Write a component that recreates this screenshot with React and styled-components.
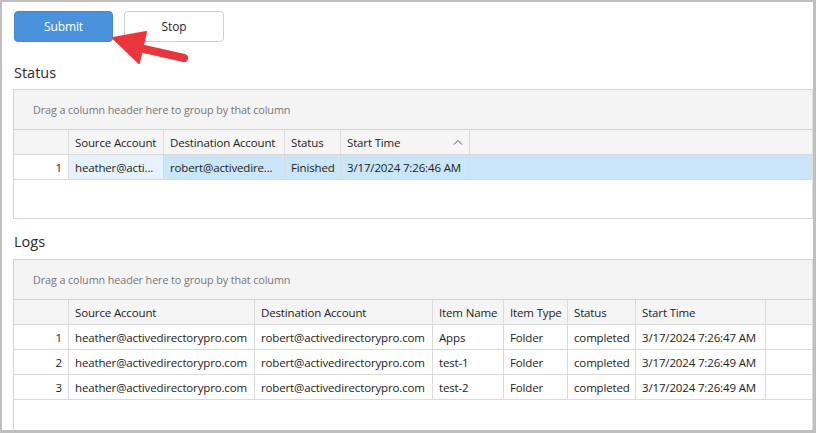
import React from "react";
import styled, { createGlobalStyle } from "styled-components";

const Global = createGlobalStyle`
  html, body { margin: 0; padding: 0; background: #fff; }
  body { font-family: "Open Sans", "Noto Sans", sans-serif; color: #1e1e1e; }
`;

const Frame = styled.div`
  position: relative;
  box-sizing: border-box;
  width: 816px;
  height: 433px;
  overflow: hidden;
  border-style: solid;
  border-color: #bfbfbf;
  border-width: 2px 3px 3px 2px;
  padding: 9px 0 0 11px;
  background: #fff;
`;

const Toolbar = styled.div`
  display: flex;
  gap: 11px;
  padding-left: 1px;
`;

const Button = styled.button`
  box-sizing: border-box;
  width: ${(p) => p.$w}px;
  height: 31px;
  border-radius: 4px;
  font-family: "Open Sans", sans-serif;
  font-size: 12px;
  letter-spacing: -0.1px;
  cursor: pointer;
  border: 1px solid ${(p) => (p.$primary ? "#3f88d4" : "#cfcfcf")};
  background: ${(p) => (p.$primary ? "#4a93dc" : "#ffffff")};
  color: ${(p) => (p.$primary ? "#ffffff" : "#1e1e1e")};
  padding: 0;
`;

const SectionTitle = styled.div`
  font-size: 14.5px;
  color: #2a2a2a;
  height: 20px;
  line-height: 20px;
  margin: ${(p) => p.$m};
  padding-left: 1px;
`;

const Grid = styled.div`
  box-sizing: border-box;
  border: 1px solid #d4d4d4;
  border-right: 1px solid #e0e0e0;
  height: ${(p) => p.$h}px;
  background: #fff;
  font-size: 11.5px;
  letter-spacing: -0.15px;
`;

const GroupPanel = styled.div`
  height: 39px;
  background: #f4f4f4;
  border-bottom: 1px solid #d4d4d4;
  display: flex;
  align-items: center;
  padding-left: 19px;
  font-size: 10.8px;
  letter-spacing: -0.1px;
  color: #777;
`;

const Row = styled.div`
  display: flex;
  height: 25px;
  box-sizing: border-box;
  border-bottom: 1px solid #dadada;
  background: ${(p) => (p.$header ? "#f5f5f5" : p.$selected ? "#cbe6f8" : "#fff")};
`;

const Cell = styled.div`
  box-sizing: border-box;
  flex: 0 0 ${(p) => p.$w}px;
  width: ${(p) => p.$w}px;
  border-right: 1px solid #dadada;
  padding: 0 6px;
  display: flex;
  align-items: center;
  justify-content: ${(p) => (p.$num ? "flex-end" : "space-between")};
  white-space: nowrap;
  overflow: hidden;
  color: #222;
  background: ${(p) => (p.$bg ? p.$bg : "transparent")};
`;

const Fill = styled.div`
  flex: 1;
`;

const Arrow = styled.svg`
  position: absolute;
  left: 0;
  top: 0;
  pointer-events: none;
`;

const Chevron = () => (
  <svg width="10" height="6" viewBox="0 0 10 6">
    <path d="M1 5.5 L5 1.5 L9 5.5" fill="none" stroke="#555" strokeWidth="1" />
  </svg>
);

const statusCols = [55, 95, 121, 56, 129];
const logCols = [55, 186, 178, 71, 64, 68, 130];

export default function App() {
  return (
    <>
      <Global />
      <Frame>
        <Toolbar>
          <Button $primary $w={99}>Submit</Button>
          <Button $w={100}>Stop</Button>
        </Toolbar>
        <SectionTitle $m="21px 0 6px 0">Status</SectionTitle>
        <Grid $h={130}>
          <GroupPanel>Drag a column header here to group by that column</GroupPanel>
          <Row $header>
            <Cell $w={statusCols[0]} />
            <Cell $w={statusCols[1]}>Source Account</Cell>
            <Cell $w={statusCols[2]}>Destination Account</Cell>
            <Cell $w={statusCols[3]}>Status</Cell>
            <Cell $w={statusCols[4]}>
              Start Time
              <Chevron />
            </Cell>
            <Fill />
          </Row>
          <Row $selected>
            <Cell $w={statusCols[0]} $num $bg="#ffffff">1</Cell>
            <Cell $w={statusCols[1]} $bg="#e6f3fc">heather@acti...</Cell>
            <Cell $w={statusCols[2]}>robert@activedire...</Cell>
            <Cell $w={statusCols[3]}>Finished</Cell>
            <Cell $w={statusCols[4]}>3/17/2024 7:26:46 AM</Cell>
            <Fill />
          </Row>
        </Grid>
        <SectionTitle $m="13px 0 7px 0">Logs</SectionTitle>
        <Grid $h={180}>
          <GroupPanel>Drag a column header here to group by that column</GroupPanel>
          <Row $header>
            <Cell $w={logCols[0]} />
            <Cell $w={logCols[1]}>Source Account</Cell>
            <Cell $w={logCols[2]}>Destination Account</Cell>
            <Cell $w={logCols[3]}>Item Name</Cell>
            <Cell $w={logCols[4]}>Item Type</Cell>
            <Cell $w={logCols[5]}>Status</Cell>
            <Cell $w={logCols[6]}>Start Time</Cell>
            <Fill />
          </Row>
          {[
            ["1", "Apps", "3/17/2024 7:26:47 AM"],
            ["2", "test-1", "3/17/2024 7:26:49 AM"],
            ["3", "test-2", "3/17/2024 7:26:49 AM"],
          ].map(([n, item, t]) => (
            <Row key={n}>
              <Cell $w={logCols[0]} $num>{n}</Cell>
              <Cell $w={logCols[1]}>heather@activedirectorypro.com</Cell>
              <Cell $w={logCols[2]}>robert@activedirectorypro.com</Cell>
              <Cell $w={logCols[3]}>{item}</Cell>
              <Cell $w={logCols[4]}>Folder</Cell>
              <Cell $w={logCols[5]}>completed</Cell>
              <Cell $w={logCols[6]}>{t}</Cell>
              <Fill />
            </Row>
          ))}
        </Grid>
        <Arrow width="816" height="433" viewBox="0 0 816 433">
          <line x1="133" y1="45" x2="182" y2="56" stroke="#e8363c" strokeWidth="8" strokeLinecap="round" />
          <polygon points="111,36 144,30 137,61" fill="#e8363c" strokeLinejoin="round" stroke="#e8363c" strokeWidth="2" />
        </Arrow>
      </Frame>
    </>
  );
}
